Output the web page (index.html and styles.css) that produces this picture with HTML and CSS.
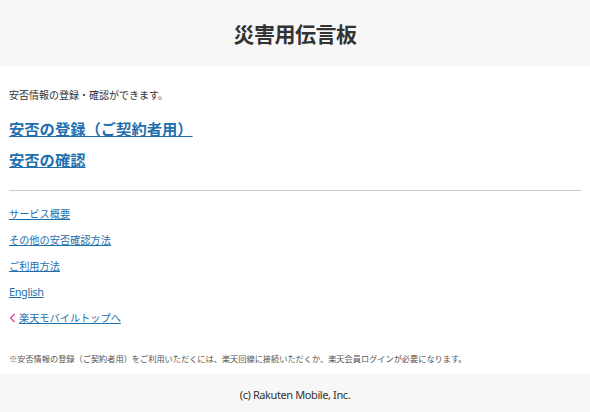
FILE: index.html
```html
<!DOCTYPE html>
<html lang="ja">
<head>
  <meta charset="UTF-8">
  <title>災害用伝言板</title>
  <meta name="viewport" content="width=device-width, initial-scale=1.0">
  <link rel="stylesheet" href="styles.css">
</head>
<body>
  <header class="header">
    <h1 class="title">災害用伝言板</h1>
  </header>
  <main class="main">
    <p class="lead">安否情報の登録・確認ができます。</p>
    <ul class="main-links">
      <li><a href="#">安否の登録（ご契約者用）</a></li>
      <li><a href="#">安否の確認</a></li>
    </ul>
    <hr class="divider">
    <ul class="sub-links">
      <li><a href="#">サービス概要</a></li>
      <li><a href="#">その他の安否確認方法</a></li>
      <li><a href="#">ご利用方法</a></li>
      <li><a href="#" class="latin">English</a></li>
      <li class="back">
        <svg class="chevron" width="7" height="10" viewBox="0 0 7 10">
          <path d="M5.5 1 L1.5 5 L5.5 9" fill="none" stroke="#d23c8a" stroke-width="1.2"/>
        </svg>
        <a href="#">楽天モバイルトップへ</a>
      </li>
    </ul>
    <p class="note">※安否情報の登録（ご契約者用）をご利用いただくには、楽天回線に接続いただくか、楽天会員ログインが必要になります。</p>
  </main>
  <footer class="footer">(c) Rakuten Mobile, Inc.</footer>
</body>
</html>
```

FILE: styles.css
```css
html, body {
  margin: 0;
  padding: 0;
  background: #fff;
  font-family: "Noto Sans CJK JP", "Noto Sans", sans-serif;
  color: #333;
}
.header {
  background: #f7f7f7;
  height: 66px;
  display: flex;
  align-items: center;
  justify-content: center;
}
.title {
  margin: 0;
  font-size: 21px;
  font-weight: bold;
  color: #333;
  letter-spacing: -0.5px;
}
.main {
  padding: 21px 9px 10px;
}
.lead {
  margin: 0;
  font-size: 10px;
  line-height: 16px;
  color: #333;
}
ul {
  list-style: none;
  margin: 0;
  padding: 0;
}
a {
  color: #1f6fae;
}
.main-links {
  margin-top: 10px;
}
.main-links li {
  font-size: 15.3px;
  font-weight: bold;
  line-height: 31px;
}
.divider {
  border: none;
  border-top: 1px solid #ccc;
  margin: 15px 0 10px;
}
.sub-links li {
  font-size: 10.2px;
  line-height: 26px;
}
.sub-links .latin {
  font-family: "Noto Sans", sans-serif;
  font-size: 11px;
  letter-spacing: -0.4px;
}
.back {
  display: flex;
  align-items: center;
  gap: 3px;
}
.note {
  margin: 21px 0 0;
  font-size: 8.2px;
  line-height: 12px;
  color: #555;
}
.footer {
  background: #f7f7f7;
  height: 40px;
  display: flex;
  align-items: center;
  justify-content: center;
  font-family: "Noto Sans", sans-serif;
  font-size: 11px;
  letter-spacing: -0.4px;
  color: #333;
}
```
